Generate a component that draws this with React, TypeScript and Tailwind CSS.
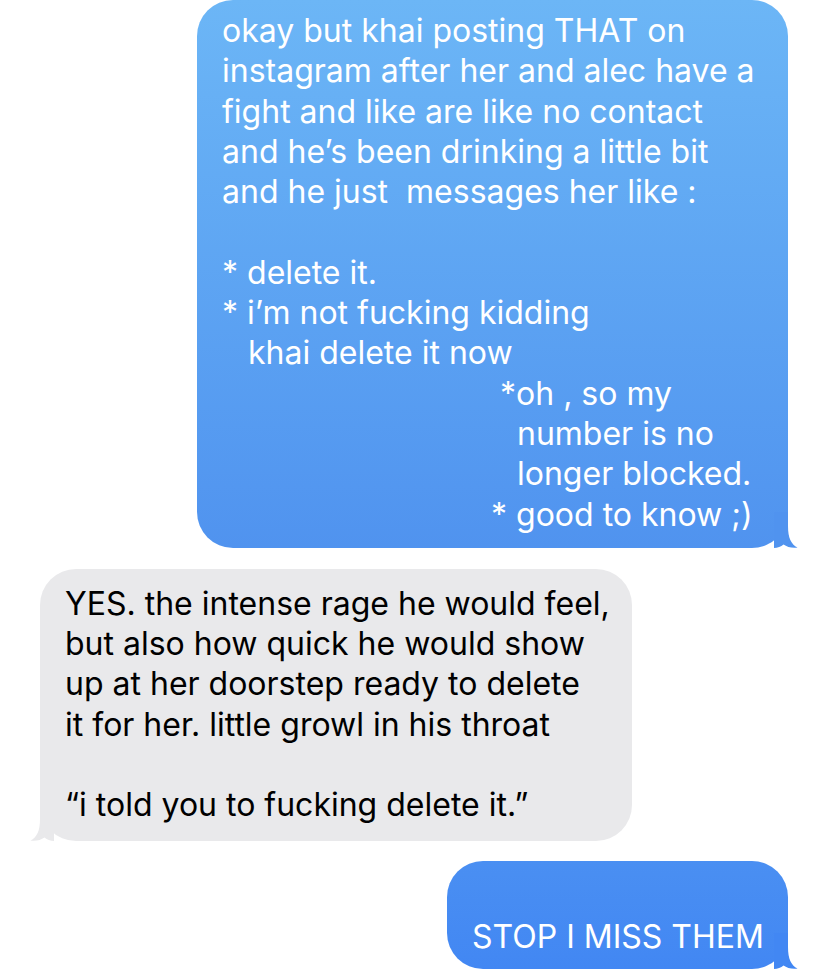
import React from 'react';

type Line = { text: string; indent?: number };

function Tail({ side, color }: { side: 'left' | 'right'; color: string }) {
  // little hook under the bubble, drawn like the iOS one
  const flip = side === 'left';
  return (
    <svg
      width="26"
      height="36"
      viewBox="0 0 26 36"
      className={flip ? 'absolute bottom-0 -left-[12px] -scale-x-100' : 'absolute bottom-0 -right-[12px]'}
    >
      <path
        d="M0 0 H14 V14 C14 26 17 32 23.5 35.6 C18 36.4 13 35 9.5 32.5 C7 34.5 3.5 36 0 36 Z"
        fill={color}
      />
    </svg>
  );
}

function Lines({ lines }: { lines: Line[] }) {
  return (
    <>
      {lines.map((l, i) => (
        <div key={i} className="whitespace-pre" style={l.indent ? { paddingLeft: l.indent } : undefined}>
          {l.text === '' ? '\u00a0' : l.text}
        </div>
      ))}
    </>
  );
}

const first: Line[] = [
  { text: 'okay but khai posting THAT on' },
  { text: 'instagram after her and alec have a' },
  { text: 'fight and like are like no contact' },
  { text: 'and he\u2019s been drinking a little bit' },
  { text: 'and he just  messages her like :' },
  { text: '' },
  { text: '* delete it.' },
  { text: '* i\u2019m not fucking kidding' },
  { text: 'khai delete it now', indent: 26 },
  { text: '*oh , so my', indent: 278 },
  { text: 'number is no', indent: 295 },
  { text: 'longer blocked.', indent: 295 },
  { text: '* good to know ;)', indent: 269 },
];

const reply: Line[] = [
  { text: 'YES. the intense rage he would feel,' },
  { text: 'but also how quick he would show' },
  { text: 'up at her doorstep ready to delete' },
  { text: 'it for her. little growl in his throat' },
  { text: '' },
  { text: '\u201ci told you to fucking delete it.\u201d' },
];

export default function App() {
  return (
    <div
      className="w-[827px] h-[971px] overflow-hidden bg-white flex flex-col gap-5 pl-[40px] pr-[39px] text-[32px] leading-[40.3px]"
      style={{ fontFamily: '"Inter", "Roboto", "Liberation Sans", sans-serif' }}
    >
      {/* sent */}
      <div className="relative self-end w-[591px] rounded-[36px] bg-gradient-to-b from-[#6cb6f6] to-[#5093ef] pl-[25px] pt-[11px] pb-[13px] text-white">
        <Lines lines={first} />
        <Tail side="right" color="#5093ef" />
      </div>

      {/* received */}
      <div className="relative self-start mt-px w-[592px] rounded-[36px] bg-[#e9e9eb] pl-[25px] pt-[15px] pb-[15px] text-black">
        <Lines lines={reply} />
        <Tail side="left" color="#e9e9eb" />
      </div>

      {/* sent */}
      <div className="relative self-end w-[341px] rounded-[36px] bg-gradient-to-b from-[#4a8ff2] to-[#4287f3] pl-[25px] pt-[16px] pb-[12px] text-white">
        <Lines lines={[{ text: '' }, { text: 'STOP I MISS THEM' }]} />
        <Tail side="right" color="#4287f3" />
      </div>
    </div>
  );
}
